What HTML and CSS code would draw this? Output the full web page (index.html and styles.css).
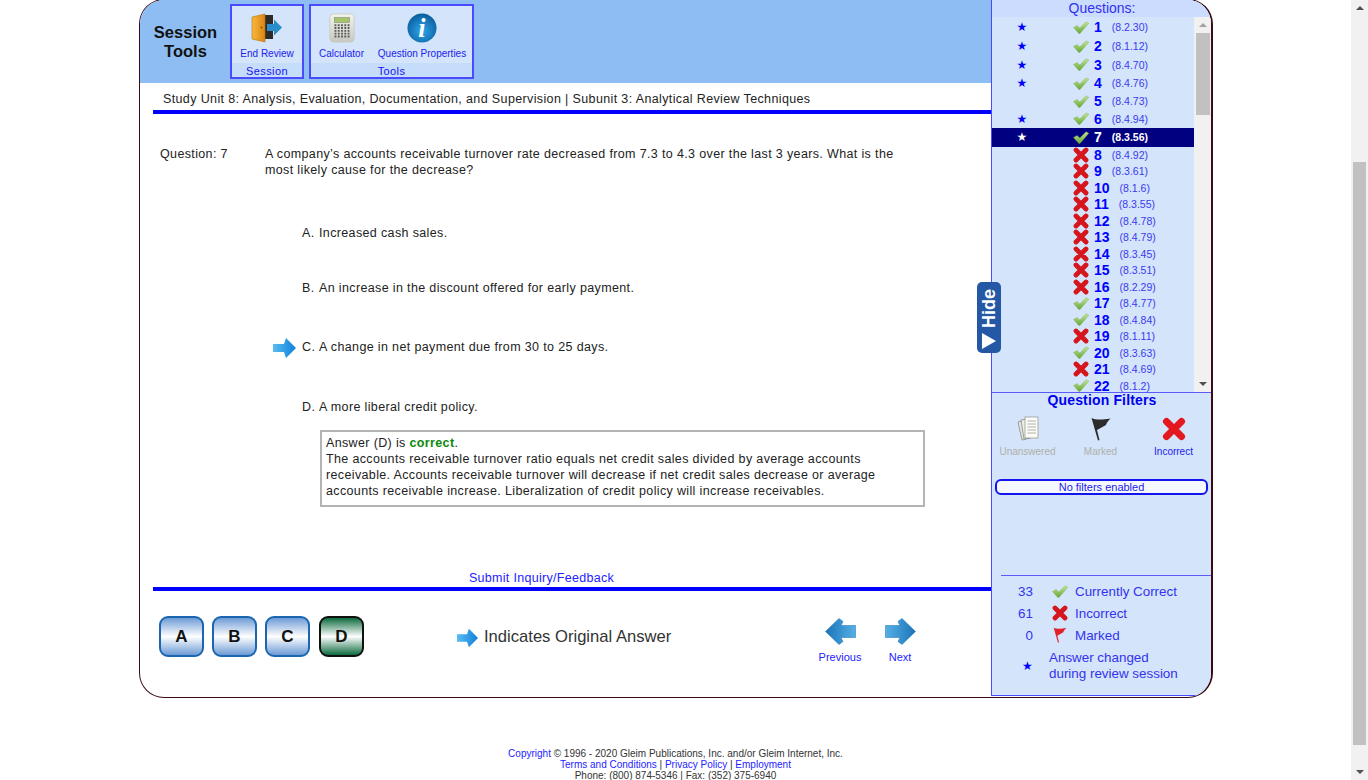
FILE: index.html
```html
<!DOCTYPE html>
<html lang="en">
<head>
    <meta charset="UTF-8">
    <meta name="viewport" content="width=device-width, initial-scale=1.0">
    <title>Session Review</title>
    <link rel="stylesheet" href="styles.css">
</head>

<body>
    <!-- shared icons -->
    <svg class="icon-defs" width="0" height="0">
        <defs>
            <linearGradient id="gradCheck" x1="0" y1="0" x2="0" y2="1">
                <stop offset="0" stop-color="#c4e49a"/>
                <stop offset="1" stop-color="#66a834"/>
            </linearGradient>
            <linearGradient id="gradArrow" x1="0" y1="0" x2="1" y2="0">
                <stop offset="0" stop-color="#58bcf4"/>
                <stop offset="1" stop-color="#1080d8"/>
            </linearGradient>
            <linearGradient id="gradNav" x1="0" y1="0" x2="1" y2="0">
                <stop offset="0" stop-color="#55b0e4"/>
                <stop offset="1" stop-color="#1c74b8"/>
            </linearGradient>
            <linearGradient id="gradDoor" x1="0" y1="0" x2="1" y2="0">
                <stop offset="0" stop-color="#f8b83c"/>
                <stop offset="1" stop-color="#dc8414"/>
            </linearGradient>
            <linearGradient id="gradCalc" x1="0" y1="0" x2="0" y2="1">
                <stop offset="0" stop-color="#f4f4ee"/>
                <stop offset="1" stop-color="#c8c8c0"/>
            </linearGradient>
            <radialGradient id="gradInfo" cx="0.5" cy="0.6" r="0.6">
                <stop offset="0" stop-color="#2ea8ec"/>
                <stop offset="1" stop-color="#0a5c9c"/>
            </radialGradient>
            <symbol id="check" viewBox="0 0 16 13">
                <path d="M0.5 6.5 L4 4.5 L6.8 7 L13 0.8 L15.8 2.2 L7 12.4 L5.8 12.4 Z" fill="url(#gradCheck)" stroke="#7cb04c" stroke-width="0.4"/>
            </symbol>
            <symbol id="cross" viewBox="0 0 16 16">
                <path d="M3 3 L13 13 M13 3 L3 13" stroke="#d5161c" stroke-width="4.8" stroke-linecap="round"/>
            </symbol>
            <symbol id="arrow" viewBox="0 0 23 20">
                <path d="M0 6 H11 L13 0 L23 10 L13 20 L11 14 H0 Z" fill="url(#gradArrow)"/>
            </symbol>
            <symbol id="flag" viewBox="0 0 20 24">
                <path d="M0.5 1 C5 3 10 3 19.5 1.5 C17 4 15.5 6 15 8 C12 10 9 11 6 13 L8.5 23 L7 23.5 Z"/>
            </symbol>
            <symbol id="nav-next" viewBox="0 0 31 27">
                <path d="M0.5 7.5 H15 L13 3.5 L17 0.5 L30.5 13.5 L17 26.5 L13 23.5 L15 19.5 H0.5 Z" fill="url(#gradNav)" stroke="#2b80bd" stroke-width="0.6"/>
            </symbol>
        </defs>
    </svg>

    <div class="page">
        <div class="frame">
            <div class="main">
                <div class="toolbar">
                    <div class="toolbar-title">Session<br>Tools</div>

                    <div class="tool-group tool-group-session">
                        <div class="tool-items">
                            <a class="tool">
                                <svg class="tool-icon" viewBox="0 0 32 30" width="32" height="30">
                                    <rect x="10" y="2" width="12" height="24" fill="#2e2a28"/>
                                    <path d="M1 4 L14 1 V29 L1 26 Z" fill="url(#gradDoor)" stroke="#b87414" stroke-width="0.6"/>
                                    <circle cx="10.5" cy="14.5" r="0.9" fill="#7a4808"/>
                                    <path d="M16 11 H23 V6.5 L31 14.5 L23 22.5 V18 H16 Z" fill="#2a8cc8"/>
                                </svg>
                                <span class="tool-label">End Review</span>
                            </a>
                        </div>
                        <div class="tool-group-name">Session</div>
                    </div>

                    <div class="tool-group tool-group-tools">
                        <div class="tool-items">
                            <a class="tool tool-calc">
                                <svg class="tool-icon" viewBox="0 0 28 32" width="28" height="32">
                                    <rect x="1" y="1" width="26" height="30" rx="4" fill="url(#gradCalc)" stroke="#c8c8c0" stroke-width="0.8"/>
                                    <rect x="6" y="5" width="16" height="5" fill="#a6c46a" stroke="#6a7a50" stroke-width="0.5"/>
                                    <path d="M6 13 H22 M6 16 H22 M6 19 H22 M6 22 H22 M6 25 H22" stroke="#5a5a5a" stroke-width="2" stroke-dasharray="2 1.5"/>
                                </svg>
                                <span class="tool-label">Calculator</span>
                            </a>
                            <a class="tool tool-props">
                                <svg class="tool-icon" viewBox="0 0 32 32" width="32" height="32">
                                    <circle cx="16" cy="16" r="15.5" fill="url(#gradInfo)"/>
                                    <text x="16" y="26" class="info-mark" text-anchor="middle">i</text>
                                </svg>
                                <span class="tool-label">Question Properties</span>
                            </a>
                        </div>
                        <div class="tool-group-name">Tools</div>
                    </div>
                </div>

                <div class="content">
                    <div class="unit-title">Study Unit 8: Analysis, Evaluation, Documentation, and Supervision | Subunit 3: Analytical Review Techniques</div>

                    <div class="question-area">
                        <div class="question">
                            <div class="question-num">Question: 7</div>
                            <div class="question-text">A company’s accounts receivable turnover rate decreased from 7.3 to 4.3 over the last 3 years. What is the most likely cause for the decrease?</div>
                        </div>

                        <div class="option option-a"><span class="option-mark"></span><span class="option-letter">A.</span><span>Increased cash sales.</span></div>
                        <div class="option option-b"><span class="option-mark"></span><span class="option-letter">B.</span><span>An increase in the discount offered for early payment.</span></div>
                        <div class="option option-c"><span class="option-mark"><svg width="23" height="20"><use href="#arrow"/></svg></span><span class="option-letter">C.</span><span>A change in net payment due from 30 to 25 days.</span></div>
                        <div class="option option-d"><span class="option-mark"></span><span class="option-letter">D.</span><span>A more liberal credit policy.</span></div>

                        <div class="answer-box">
                            Answer (D) is <b class="correct">correct</b>.<br>
                            The accounts receivable turnover ratio equals net credit sales divided by average accounts receivable. Accounts receivable turnover will decrease if net credit sales decrease or average accounts receivable increase. Liberalization of credit policy will increase receivables.
                        </div>
                    </div>

                    <div class="submit-row"><a href="#">Submit Inquiry/Feedback</a></div>

                    <div class="bottom-bar">
                        <div class="answer-buttons">
                            <button class="answer-btn">A</button>
                            <button class="answer-btn">B</button>
                            <button class="answer-btn">C</button>
                            <button class="answer-btn answer-btn-on">D</button>
                        </div>
                        <div class="legend">
                            <svg width="21" height="20"><use href="#arrow"/></svg>
                            <span>Indicates Original Answer</span>
                        </div>
                        <div class="nav-buttons">
                            <a class="nav-btn">
                                <svg class="flip" width="31" height="27"><use href="#nav-next"/></svg>
                                <span>Previous</span>
                            </a>
                            <a class="nav-btn">
                                <svg width="31" height="27"><use href="#nav-next"/></svg>
                                <span>Next</span>
                            </a>
                        </div>
                    </div>
                </div>
            </div>

            <div class="side">
                <div class="side-head">Questions:</div>
                <div class="q-wrap">
                    <div class="q-list">
                        <div class="q-row starred"><span class="q-star">★</span><svg class="q-icon" width="16" height="13"><use href="#check"/></svg><span class="q-num">1</span><span class="q-ref">(8.2.30)</span></div>
                        <div class="q-row starred"><span class="q-star">★</span><svg class="q-icon" width="16" height="13"><use href="#check"/></svg><span class="q-num">2</span><span class="q-ref">(8.1.12)</span></div>
                        <div class="q-row starred"><span class="q-star">★</span><svg class="q-icon" width="16" height="13"><use href="#check"/></svg><span class="q-num">3</span><span class="q-ref">(8.4.70)</span></div>
                        <div class="q-row starred"><span class="q-star">★</span><svg class="q-icon" width="16" height="13"><use href="#check"/></svg><span class="q-num">4</span><span class="q-ref">(8.4.76)</span></div>
                        <div class="q-row"><span class="q-star"></span><svg class="q-icon" width="16" height="13"><use href="#check"/></svg><span class="q-num">5</span><span class="q-ref">(8.4.73)</span></div>
                        <div class="q-row starred"><span class="q-star">★</span><svg class="q-icon" width="16" height="13"><use href="#check"/></svg><span class="q-num">6</span><span class="q-ref">(8.4.94)</span></div>
                        <div class="q-row starred q-current"><span class="q-star">★</span><svg class="q-icon" width="16" height="13"><use href="#check"/></svg><span class="q-num">7</span><span class="q-ref">(8.3.56)</span></div>
                        <div class="q-row"><span class="q-star"></span><svg class="q-icon" width="16" height="16"><use href="#cross"/></svg><span class="q-num">8</span><span class="q-ref">(8.4.92)</span></div>
                        <div class="q-row"><span class="q-star"></span><svg class="q-icon" width="16" height="16"><use href="#cross"/></svg><span class="q-num">9</span><span class="q-ref">(8.3.61)</span></div>
                        <div class="q-row"><span class="q-star"></span><svg class="q-icon" width="16" height="16"><use href="#cross"/></svg><span class="q-num">10</span><span class="q-ref">(8.1.6)</span></div>
                        <div class="q-row"><span class="q-star"></span><svg class="q-icon" width="16" height="16"><use href="#cross"/></svg><span class="q-num">11</span><span class="q-ref">(8.3.55)</span></div>
                        <div class="q-row"><span class="q-star"></span><svg class="q-icon" width="16" height="16"><use href="#cross"/></svg><span class="q-num">12</span><span class="q-ref">(8.4.78)</span></div>
                        <div class="q-row"><span class="q-star"></span><svg class="q-icon" width="16" height="16"><use href="#cross"/></svg><span class="q-num">13</span><span class="q-ref">(8.4.79)</span></div>
                        <div class="q-row"><span class="q-star"></span><svg class="q-icon" width="16" height="16"><use href="#cross"/></svg><span class="q-num">14</span><span class="q-ref">(8.3.45)</span></div>
                        <div class="q-row"><span class="q-star"></span><svg class="q-icon" width="16" height="16"><use href="#cross"/></svg><span class="q-num">15</span><span class="q-ref">(8.3.51)</span></div>
                        <div class="q-row"><span class="q-star"></span><svg class="q-icon" width="16" height="16"><use href="#cross"/></svg><span class="q-num">16</span><span class="q-ref">(8.2.29)</span></div>
                        <div class="q-row"><span class="q-star"></span><svg class="q-icon" width="16" height="13"><use href="#check"/></svg><span class="q-num">17</span><span class="q-ref">(8.4.77)</span></div>
                        <div class="q-row"><span class="q-star"></span><svg class="q-icon" width="16" height="13"><use href="#check"/></svg><span class="q-num">18</span><span class="q-ref">(8.4.84)</span></div>
                        <div class="q-row"><span class="q-star"></span><svg class="q-icon" width="16" height="16"><use href="#cross"/></svg><span class="q-num">19</span><span class="q-ref">(8.1.11)</span></div>
                        <div class="q-row"><span class="q-star"></span><svg class="q-icon" width="16" height="13"><use href="#check"/></svg><span class="q-num">20</span><span class="q-ref">(8.3.63)</span></div>
                        <div class="q-row"><span class="q-star"></span><svg class="q-icon" width="16" height="16"><use href="#cross"/></svg><span class="q-num">21</span><span class="q-ref">(8.4.69)</span></div>
                        <div class="q-row"><span class="q-star"></span><svg class="q-icon" width="16" height="13"><use href="#check"/></svg><span class="q-num">22</span><span class="q-ref">(8.1.2)</span></div>
                    </div>
                    <div class="scroll scroll-inner">
                        <div class="scroll-arrow"><span class="tri-up"></span></div>
                        <div class="scroll-thumb"></div>
                        <div class="scroll-space"></div>
                        <div class="scroll-arrow"><span class="tri-down"></span></div>
                    </div>
                </div>

                <div class="filters">
                    <div class="filters-title">Question Filters</div>
                    <div class="filter-grid">
                        <div class="filter filter-off">
                            <svg viewBox="0 0 24 26" width="24" height="26">
                                <path d="M2 6 L9 4 L14 22 L6 24 Z" fill="#e4e4de" stroke="#8c8c86" stroke-width="0.8"/>
                                <path d="M5 4 L12 3 L15 22 L8 23 Z" fill="#eeeeea" stroke="#8c8c86" stroke-width="0.8"/>
                                <rect x="9" y="1" width="13" height="21" fill="#fbfbf8" stroke="#9c9c96" stroke-width="0.8"/>
                                <path d="M11.5 5 H20 M11.5 8 H20 M11.5 11 H20 M11.5 14 H20 M11.5 17 H20" stroke="#b0b0aa" stroke-width="1"/>
                            </svg>
                            <span>Unanswered</span>
                        </div>
                        <div class="filter filter-off">
                            <svg class="flag-black" width="20" height="26"><use href="#flag"/></svg>
                            <span>Marked</span>
                        </div>
                        <div class="filter filter-on">
                            <svg class="big-cross" viewBox="0 0 24 24" width="24" height="26">
                                <path d="M4.5 4.5 L19.5 19.5 M19.5 4.5 L4.5 19.5" stroke="#e3191f" stroke-width="7" stroke-linecap="round"/>
                            </svg>
                            <span>Incorrect</span>
                        </div>
                    </div>
                    <div class="filter-status">No filters enabled</div>
                </div>

                <div class="stats">
                    <div class="stat"><span class="stat-num">33</span><svg width="17" height="13"><use href="#check"/></svg><span>Currently Correct</span></div>
                    <div class="stat"><span class="stat-num">61</span><svg width="16" height="16"><use href="#cross"/></svg><span>Incorrect</span></div>
                    <div class="stat"><span class="stat-num">0</span><svg class="flag-red" width="16" height="16"><use href="#flag"/></svg><span>Marked</span></div>
                    <div class="stat-note"><span class="stat-star">★</span><span>Answer changed<br>during review session</span></div>
                </div>
            </div>

            <div class="hide-tab"><span class="hide-tri"></span><span class="hide-text">Hide</span></div>
        </div>

        <div class="footer">
            <a href="#">Copyright</a> © 1996 - 2020 Gleim Publications, Inc. and/or Gleim Internet, Inc.<br>
            <a href="#">Terms and Conditions</a> | <a href="#">Privacy Policy</a> | <a href="#">Employment</a><br>
            Phone: (800) 874-5346 | Fax: (352) 375-6940
        </div>
    </div>

    <div class="scroll scroll-page">
        <div class="scroll-arrow"><span class="tri-up"></span></div>
        <div class="scroll-gap"></div>
        <div class="scroll-thumb"></div>
        <div class="scroll-space"></div>
        <div class="scroll-arrow"><span class="tri-down"></span></div>
    </div>
</body>
</html>
```

FILE: styles.css
```css
* {
    box-sizing: border-box;
}

html, body {
    height: 780px;
    overflow: hidden;
}

body {
    font-family: "Liberation Sans", Arial, sans-serif;
    font-size: 12.5px;
    letter-spacing: 0.36px;
    color: #222;
    background-color: #fff;
    display: flex;
    margin: 0;
}

a {
    color: #2222ff;
    text-decoration: none;
}

.icon-defs {
    position: absolute;
}

.page {
    width: 1351px;
    flex: none;
}

/* outer rounded frame */
.frame {
    position: relative;
    display: flex;
    width: 1074px;
    height: 699px;
    margin: -1px 0 0 139px;
    background-color: #fff;
    border: 1px solid #3c0c14;
    border-right-width: 2px;
    border-radius: 25px;
    overflow: hidden;
}

.main {
    width: 851px;
    flex: none;
    display: flex;
    flex-direction: column;
}

.toolbar {
    height: 83px;
    background-color: #8dbdf2;
    display: flex;
    padding: 4px 0;
    letter-spacing: 0;
}

.toolbar-title {
    width: 90px;
    padding: 19px 0 0 1px;
    font-size: 16.5px;
    font-weight: bold;
    line-height: 19px;
    color: #111;
    text-align: center;
}

.tool-group {
    height: 75px;
    background-color: #d3e4fb;
    border: 2px solid #4a4aff;
    display: flex;
    flex-direction: column;
    margin-right: 5px;
}

.tool-group-session {
    width: 74px;
}

.tool-group-tools {
    width: 165px;
}

.tool-items {
    height: 59px;
    display: flex;
}

.tool {
    display: flex;
    flex-direction: column;
    align-items: center;
    flex: 1;
    padding-top: 7px;
}

.tool-calc {
    flex: none;
    width: 61px;
}

.tool-icon {
    height: 30px;
    display: block;
}

.tool-label {
    margin-top: 5px;
    font-size: 10px;
    line-height: 12px;
    color: #2222ee;
    white-space: nowrap;
}

.tool-group-name {
    height: 14px;
    padding-top: 1px;
    background-color: #c6dcfb;
    font-size: 11px;
    letter-spacing: 0.4px;
    line-height: 14px;
    color: #1414ee;
    text-align: center;
}

.info-mark {
    font-family: "Liberation Serif", serif;
    font-style: italic;
    font-weight: bold;
    font-size: 28px;
    fill: #fff;
}

.content {
    flex: 1;
    display: flex;
    flex-direction: column;
    padding-left: 13px;
}

.unit-title {
    height: 31px;
    padding: 8px 0 0 10px;
    border-bottom: 4px solid #0000ff;
    line-height: 16px;
    letter-spacing: 0.37px;
}

.question-area {
    flex: 1;
}

.question {
    display: flex;
    padding: 32px 0 0 7px;
    line-height: 16px;
}

.question-num {
    width: 105px;
    flex: none;
}

.question-text {
    width: 640px;
}

.option {
    display: flex;
    align-items: center;
    height: 16px;
    padding-left: 120px;
}

.option-a {
    margin-top: 47px;
}

.option-b {
    margin-top: 39px;
}

.option-c {
    margin-top: 43px;
}

.option-d {
    margin-top: 44px;
}

.option-mark {
    width: 29px;
    flex: none;
}

.option-mark svg {
    display: block;
    margin-top: 1px;
}

.option-letter {
    width: 17px;
    flex: none;
}

.answer-box {
    width: 605px;
    height: 77px;
    margin: 15px 0 0 167px;
    padding: 3px 36px 0 4px;
    border: 2px solid #b4b4b4;
    line-height: 16px;
}

.correct {
    color: #0a8a0a;
}

.submit-row {
    height: 20px;
    width: 777px;
    padding-top: 3px;
    text-align: center;
    line-height: 16px;
    letter-spacing: 0.3px;
}

.bottom-bar {
    height: 110px;
    border-top: 4px solid #0000ff;
    display: flex;
    align-items: flex-start;
    padding: 25px 61px 0 6px;
    letter-spacing: 0;
}

.answer-buttons {
    display: flex;
    gap: 8px;
    width: 205px;
}

.answer-btn {
    width: 45px;
    height: 41px;
    padding: 0;
    font-family: "Liberation Sans", Arial, sans-serif;
    font-size: 17px;
    font-weight: bold;
    color: #111;
    border: 2px solid #1a66b0;
    border-radius: 9px;
    background: linear-gradient(#6d9bd6, #fff 50%, #6d9bd6);
}

.answer-btn-on {
    margin-left: 1px;
    border-color: #111;
    background: linear-gradient(#0d6b3e, #fff 50%, #0d6b3e);
}

.legend {
    display: flex;
    align-items: center;
    gap: 6px;
    height: 41px;
    padding-top: 1px;
    font-size: 16.6px;
    color: #333;
    margin-left: 93px;
}

.legend svg {
    margin-top: 1px;
}

.nav-buttons {
    display: flex;
    margin-left: auto;
}

.nav-btn {
    width: 60px;
    display: flex;
    flex-direction: column;
    align-items: center;
    gap: 6px;
    font-size: 11px;
    line-height: 13px;
    padding-top: 2px;
    color: #2222ff;
}

.flip {
    transform: scaleX(-1);
}

/* right hand panel */
.side {
    width: 221px;
    flex: none;
    display: flex;
    flex-direction: column;
    background-color: #d3e4fb;
    border-left: 1px solid #4a4aff;
    border-bottom: 1px solid #4a4aff;
    height: 696px;
    letter-spacing: 0;
}

.side-head {
    height: 17px;
    background-color: #cbdcff;
    font-size: 14px;
    line-height: 16px;
    color: #3030ee;
    text-align: center;
}

.q-wrap {
    display: flex;
    height: 375px;
    flex: none;
}

.q-list {
    width: 202px;
    flex: none;
    overflow: hidden;
    padding-top: 1px;
}

.q-row {
    display: flex;
    align-items: center;
    height: 16.5px;
    white-space: nowrap;
}

.starred {
    height: 18.7px;
}

.q-current {
    background-color: #000080;
}

.q-current .q-num,
.q-current .q-ref,
.q-current .q-star {
    color: #fff;
}

.q-current .q-ref {
    font-weight: bold;
}

.q-star {
    width: 60px;
    flex: none;
    text-align: center;
    font-family: "DejaVu Sans", sans-serif;
    font-size: 12px;
    color: #0000ff;
}

.q-icon {
    margin-left: 21px;
    flex: none;
}

.q-num {
    margin-left: 5px;
    font-size: 14px;
    font-weight: bold;
    color: #0000ff;
}

.q-ref {
    margin-left: 10px;
    font-size: 10.5px;
    color: #3a3aee;
}

.scroll {
    background-color: #f1f1f1;
    display: flex;
    flex-direction: column;
    align-items: center;
}

.scroll-inner {
    width: 18px;
    height: 375px;
    padding-left: 2px;
    padding-right: 2px;
}

.scroll-page {
    width: 17px;
    height: 780px;
    flex: none;
}

.scroll-arrow {
    height: 16px;
    flex: none;
    display: flex;
    align-items: center;
    justify-content: center;
}

.tri-up,
.tri-down {
    width: 0;
    height: 0;
    border-left: 4px solid transparent;
    border-right: 4px solid transparent;
}

.tri-up {
    border-bottom: 4px solid #a3a3a3;
}

.tri-down {
    border-top: 4px solid #505050;
}

.scroll-page .tri-up {
    border-bottom-color: #505050;
}

.scroll-thumb {
    width: 14px;
    flex: none;
    background-color: #c1c1c1;
}

.scroll-inner .scroll-thumb {
    height: 82px;
}

.scroll-page .scroll-thumb {
    width: 13px;
    height: 583px;
}

.scroll-gap {
    height: 146px;
    flex: none;
}

.scroll-space {
    flex: 1;
}

.filters {
    height: 183px;
    flex: none;
    border-top: 1px solid #5a5aff;
}

.filters-title {
    height: 16px;
    font-size: 14px;
    font-weight: bold;
    line-height: 14px;
    letter-spacing: 0.15px;
    color: #0000ee;
    text-align: center;
}

.filter-grid {
    display: grid;
    grid-template-columns: repeat(3, 73px);
    margin: 7px 0 0 -1px;
}

.filter {
    display: flex;
    flex-direction: column;
    align-items: center;
    font-size: 10px;
    line-height: 12px;
    gap: 4px;
}

.filter svg {
    display: block;
}

.filter-off {
    color: #b0b0a8;
}

.filter-on {
    color: #2222ee;
}

.flag-black {
    fill: #2c2c2c;
}

.flag-red {
    fill: #e0222a;
}

.filter-status {
    width: 213px;
    height: 16px;
    margin: 21px 0 0 3px;
    background-color: #f6f8ff;
    border: 2px solid #1414ee;
    border-radius: 6px;
    font-size: 11px;
    line-height: 12px;
    color: #1a1aee;
    text-align: center;
}

.stats {
    margin-left: 9px;
    border-top: 1px solid #5a5aff;
    padding-top: 4px;
    font-size: 13.4px;
    color: #3333ee;
}

.stat {
    display: flex;
    align-items: center;
    height: 22px;
}

.stat-num {
    width: 32px;
    text-align: right;
    margin-right: 18px;
    flex: none;
}

.stat svg {
    width: 18px;
    margin-right: 6px;
    flex: none;
}

.stat-note {
    display: flex;
    align-items: center;
    margin-top: 4px;
    line-height: 16px;
}

.stat-star {
    width: 48px;
    padding-left: 21px;
    flex: none;
    font-family: "DejaVu Sans", sans-serif;
    font-size: 12px;
    color: #0000ff;
}

/* tab that sits over the panel edge */
.hide-tab {
    position: absolute;
    left: 837px;
    top: 282px;
    width: 24px;
    height: 71px;
    background-color: #2458a4;
    border-radius: 5px;
    display: flex;
    flex-direction: column-reverse;
    align-items: center;
    padding: 5px 0 4px;
    gap: 5px;
    letter-spacing: 0;
}

.hide-tri {
    width: 0;
    height: 0;
    border-top: 8px solid transparent;
    border-bottom: 8px solid transparent;
    border-left: 14px solid #fff;
}

.hide-text {
    writing-mode: vertical-rl;
    transform: rotate(180deg);
    font-size: 18px;
    font-weight: bold;
    color: #fff;
    line-height: 24px;
}

.footer {
    margin-top: 50px;
    font-size: 10px;
    letter-spacing: 0;
    line-height: 11px;
    color: #333;
    text-align: center;
}
```
